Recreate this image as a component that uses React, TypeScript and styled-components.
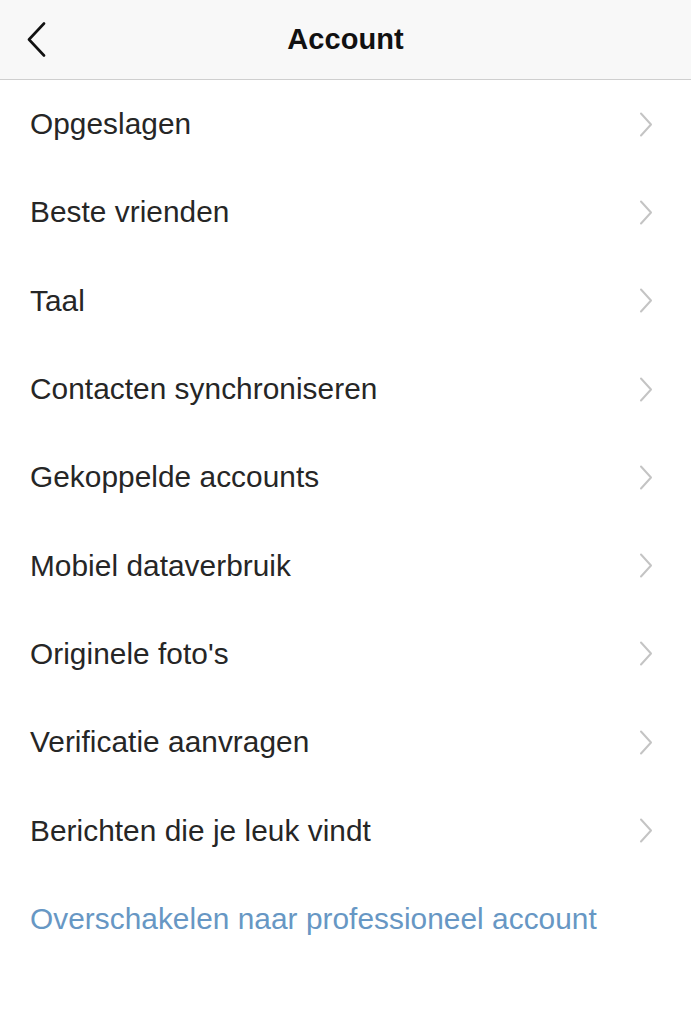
import React from "react";
import styled, { createGlobalStyle } from "styled-components";

const Global = createGlobalStyle`
  html, body { margin: 0; padding: 0; background: #ffffff; }
  body { font-family: "Liberation Sans", Arial, sans-serif; -webkit-font-smoothing: antialiased; }
  #root { width: 691px; min-height: 1024px; background: #ffffff; }
`;

const Page = styled.div`
  width: 691px;
  display: flex;
  flex-direction: column;
`;

const Header = styled.header`
  height: 79px;
  background: #f8f8f8;
  border-bottom: 1px solid #cfcfcf;
  display: grid;
  grid-template-columns: 90px 1fr 90px;
  align-items: center;
`;

const BackButton = styled.button`
  border: 0;
  background: none;
  padding: 0 0 0 27px;
  height: 79px;
  display: flex;
  align-items: center;
  justify-content: flex-start;
  cursor: pointer;
`;

const Title = styled.h1`
  margin: 0;
  text-align: center;
  font-size: 29px;
  font-weight: 700;
  color: #111111;
  letter-spacing: 0.1px;
`;

const List = styled.ul`
  list-style: none;
  margin: 0;
  padding: 0;
`;

const Row = styled.li`
  height: 88.3px;
  display: flex;
  align-items: center;
  justify-content: space-between;
  padding: 0 38px 0 30px;
  box-sizing: border-box;
`;

const Label = styled.span<{ $link?: boolean }>`
  font-size: 29.8px;
  color: ${(p) => (p.$link ? "#6797c4" : "#262626")};
  letter-spacing: 0.05px;
`;

const Chevron = () => (
  <svg width="14" height="25" viewBox="0 0 14 25" fill="none">
    <path d="M2 1.5 L12 12.5 L2 23.5" stroke="#c4c4c4" strokeWidth="2" strokeLinecap="round" strokeLinejoin="round" />
  </svg>
);

const BackIcon = () => (
  <svg width="19" height="35" viewBox="0 0 19 35" fill="none">
    <path d="M17 1.5 L2 17.5 L17 33.5" stroke="#111111" strokeWidth="2.6" strokeLinecap="round" strokeLinejoin="round" />
  </svg>
);

const items = [
  "Opgeslagen",
  "Beste vrienden",
  "Taal",
  "Contacten synchroniseren",
  "Gekoppelde accounts",
  "Mobiel dataverbruik",
  "Originele foto's",
  "Verificatie aanvragen",
  "Berichten die je leuk vindt",
];

export default function App() {
  return (
    <>
      <Global />
      <Page>
        <Header>
          <BackButton aria-label="Terug">
            <BackIcon />
          </BackButton>
          <Title>Account</Title>
          <div />
        </Header>
        <List>
          {items.map((t) => (
            <Row key={t}>
              <Label>{t}</Label>
              <Chevron />
            </Row>
          ))}
          <Row>
            <Label $link>Overschakelen naar professioneel account</Label>
          </Row>
        </List>
      </Page>
    </>
  );
}
